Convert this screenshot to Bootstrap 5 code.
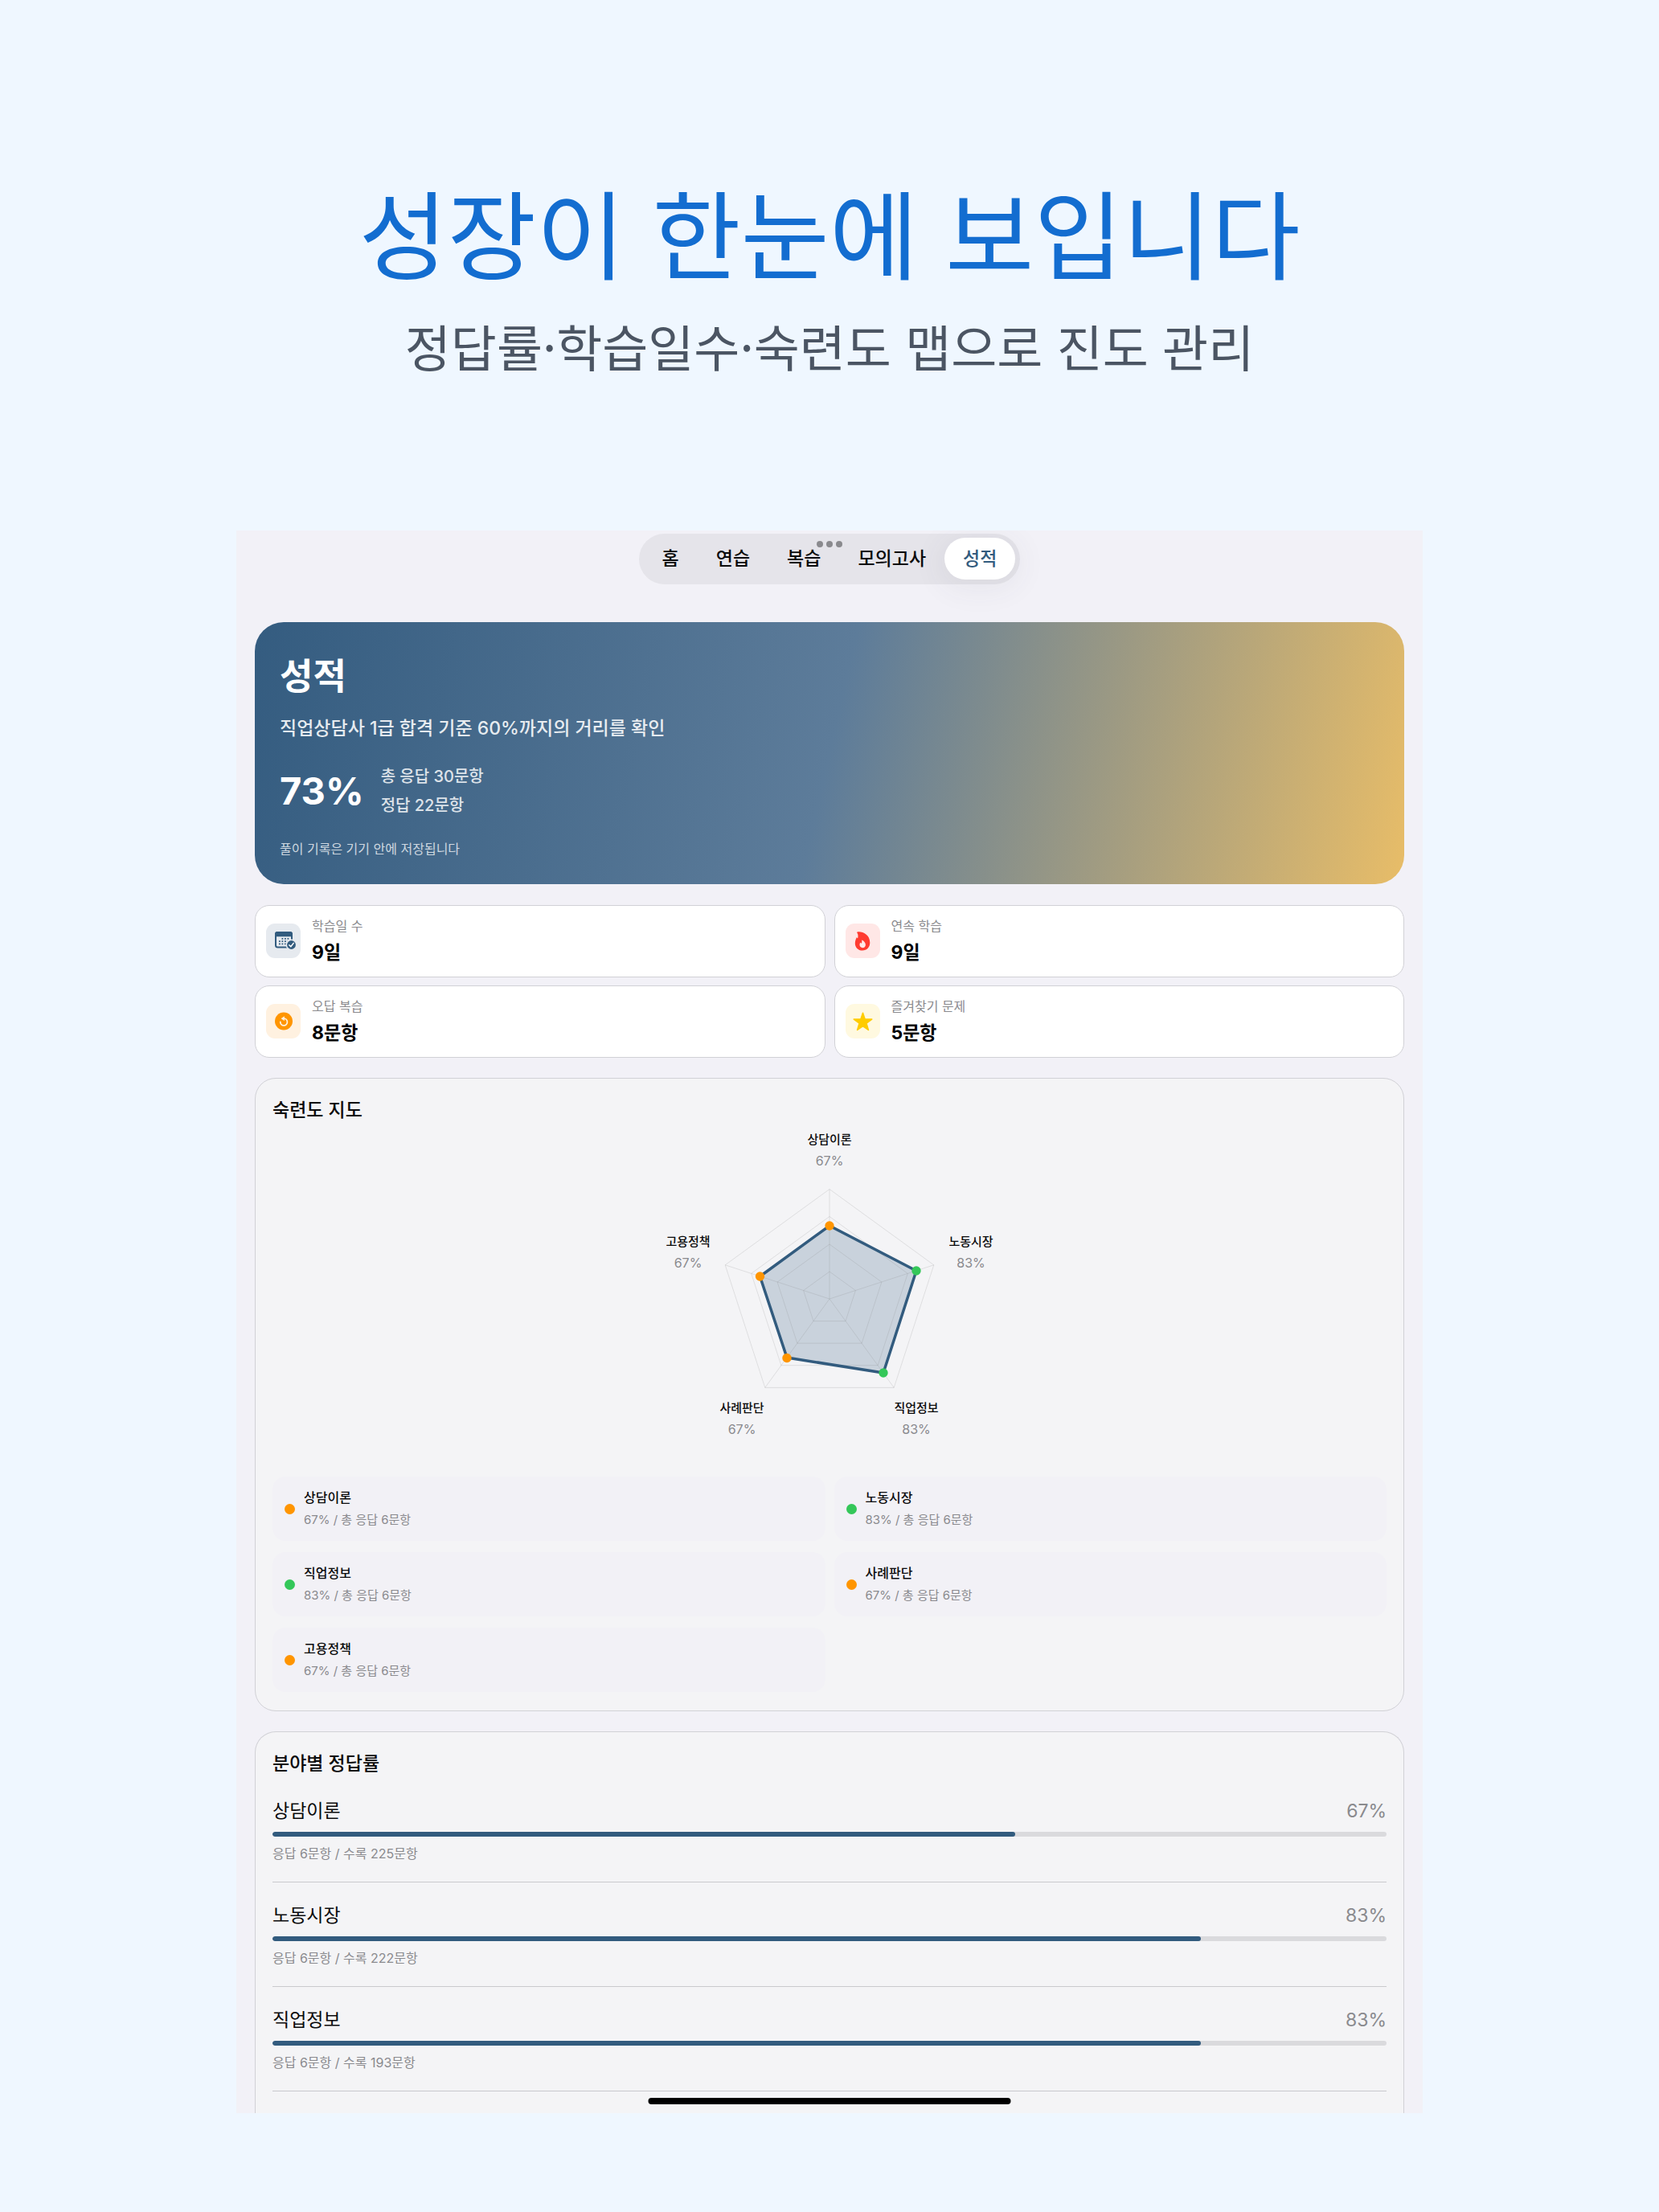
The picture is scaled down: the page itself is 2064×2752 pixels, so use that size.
<!DOCTYPE html>
<html lang="ko">
<head>
<meta charset="utf-8">
<meta name="viewport" content="width=device-width, initial-scale=1">
<title>성적</title>
<link href="https://cdn.jsdelivr.net/npm/bootstrap@5.3.0/dist/css/bootstrap.min.css" rel="stylesheet">
<style>
  :root { --navy: #325b7e; --muted: #8a8a8e; --line: #d1d1d6; --orange: #ff9500; --green: #34c759; }
  body { background: #eff7ff; color: #0b0b0c; font-family: Inter, "Noto Sans CJK KR", sans-serif; font-size: 16px; line-height: 24px; }
  .hero-copy { padding: 207px 24px 180px; font-family: "Noto Sans CJK KR", sans-serif; }
  .hero-copy h1 { font-size: 120px; line-height: 160px; font-weight: 400; color: #136dd0; }
  .hero-copy p { font-size: 62px; line-height: 100px; color: #4b5563; margin-top: 13px; }
  .screen { max-width: 1476px; background: #f2f1f7; padding: 4px 23px 0; overflow: hidden; margin-bottom: 123px; }
  .tabs { background: #e5e4ea; border-radius: 32px; padding: 5px 6px 6px; }
  .tabs .nav-link { font-size: 23px; line-height: 52px; padding: 0 23px; font-weight: 500; color: #0b0b0c; border-radius: 26px; }
  .tabs .nav-link.active { color: var(--navy); background: #fff; box-shadow: 0 6px 36px 8px rgba(60,60,90,.06); }
  .dots { top: 9px; gap: 4px; }
  .dots i { width: 8px; height: 8px; border-radius: 50%; background: #8a8a8e; }
  .summary { margin-top: 47px; border-radius: 36px; padding: 36px 31px 32px; color: #fff; background: linear-gradient(102.8deg, #345c80 0%, #5d7c9a 50%, #e8bd68 100%); }
  .summary h2 { font-size: 45px; line-height: 64px; font-weight: 700; }
  .summary .goal { font-size: 23px; line-height: 32px; font-weight: 500; color: rgba(255,255,255,.88); margin-top: 16px; }
  .summary .figures { gap: 21px; margin-top: 26px; }
  .summary .rate { font-size: 47px; line-height: 56px; font-weight: 700; }
  .summary .counts { font-size: 20px; line-height: 36px; font-weight: 500; color: rgba(255,255,255,.84); }
  .summary .foot { font-size: 16px; line-height: 24px; color: rgba(255,255,255,.75); margin-top: 24px; }
  .stats { --bs-gutter-x: 11px; --bs-gutter-y: 10px; margin-top: 16px; }
  .stat { background: #fff; border: 1px solid var(--line); border-radius: 18px; padding: 9px 13px 11px; gap: 14px; height: 90px; }
  .tile { width: 43px; height: 43px; border-radius: 11px; }
  .stat .name { font-size: 16px; line-height: 30px; color: var(--muted); }
  .stat .amount { font-size: 23px; line-height: 36px; font-weight: 700; color: #000; }
  .panel { background: #f4f4f6; border: 1px solid var(--line); border-radius: 26px; padding: 23px 21px; margin-top: 25px; }
  .panel h3 { font-size: 23px; line-height: 32px; font-weight: 500; margin: 0; }
  .radar { display: block; margin: 0 auto; }
  .radar .axis-name { font-size: 15px; font-weight: 500; fill: #0b0b0c; }
  .radar .axis-rate { font-size: 16px; fill: var(--muted); }
  .legend-grid { --bs-gutter-x: 11px; --bs-gutter-y: 14px; }
  .field { background: #f2f1f6; border-radius: 16px; height: 80px; padding: 0 15px; gap: 11px; }
  .dot { width: 13px; height: 13px; border-radius: 50%; flex: none; }
  .dot.mid { background: var(--orange); } .dot.good { background: var(--green); }
  .field b { font-size: 16px; line-height: 27px; font-weight: 500; }
  .field span { font-size: 15px; line-height: 27px; color: var(--muted); }
  .panel.open { border-bottom: 0; border-radius: 26px 26px 0 0; padding-bottom: 27px; }
  .subject { border-bottom: 1px solid #c9c9cd; padding: 25px 0 21px; }
  .subject.first { padding-top: 27px; }
  .subject .top-line { font-size: 23px; line-height: 32px; }
  .subject .top-line span { color: var(--muted); }
  .subject .progress { height: 6px; margin: 10px 0 7px; background: #dadadd; border-radius: 3px; }
  .subject .progress-bar { background: var(--navy); border-radius: 3px; }
  .subject .info { font-size: 16px; line-height: 28px; color: var(--muted); }
  .home-bar { width: 451px; height: 8px; border-radius: 4px; background: #000; bottom: 11px; }
</style>
</head>
<body>
<header class="hero-copy text-center">
  <h1 class="mb-0">성장이 한눈에 보입니다</h1>
  <p class="mb-0">정답률·학습일수·숙련도 맵으로 진도 관리</p>
</header>

<main class="screen position-relative mx-auto">
  <nav class="d-flex justify-content-center" aria-label="메뉴">
    <div class="tabs nav flex-nowrap">
      <a class="nav-link" href="#home">홈</a>
      <a class="nav-link" href="#practice">연습</a>
      <a class="nav-link" href="#review">복습</a>
      <a class="nav-link" href="#mock">모의고사</a>
      <a class="nav-link active" aria-current="page" href="#score">성적</a>
    </div>
  </nav>
  <div class="dots d-flex position-absolute start-50 translate-middle-x pt-1" aria-hidden="true"><i></i><i></i><i></i></div>

  <section class="summary">
    <h2 class="mb-0">성적</h2>
    <p class="goal mb-0">직업상담사 1급 합격 기준 60%까지의 거리를 확인</p>
    <div class="figures d-flex align-items-center">
      <div class="rate">73%</div>
      <div class="counts"><div>총 응답 30문항</div><div>정답 22문항</div></div>
    </div>
    <p class="foot mb-0">풀이 기록은 기기 안에 저장됩니다</p>
  </section>

  <section class="stats row">
    <div class="col-6"><div class="stat d-flex align-items-center">
      <div class="tile d-flex align-items-center justify-content-center" style="background:#e6eaef">
        <svg width="43" height="43" viewBox="0 0 43 43"><rect x="12" y="11" width="20" height="18.500" rx="2.500" fill="none" stroke="#325b7e" stroke-width="2"/><path fill="#325b7e" d="M11 16.200V13a3 3 0 0 1 3-3h16a3 3 0 0 1 3 3v3.200z"/><path fill="#325b7e" d="M19.500 18h1.800v1.800h-1.800zM23 18h1.800v1.800H23zM26.500 18h1.800v1.800h-1.800zM16 21.200h1.800V23H16zM19.500 21.200h1.800V23h-1.800zM23 21.200h1.800V23H23zM26.500 21.200h1.800V23h-1.800zM16 24.500h1.800v1.800H16zM19.500 24.500h1.800v1.800h-1.800zM23 24.500h1.800v1.800H23z"/><circle cx="31.500" cy="26.500" r="6.200" fill="#325b7e" stroke="#e6eaef" stroke-width="1.600"/><path d="M28.800 26.800l2 2 3.400-4.400" fill="none" stroke="#fff" stroke-width="1.500" stroke-linecap="round" stroke-linejoin="round"/></svg>
      </div>
      <div><div class="name">학습일 수</div><div class="amount">9일</div></div>
    </div></div>
    <div class="col-6"><div class="stat d-flex align-items-center">
      <div class="tile d-flex align-items-center justify-content-center" style="background:#ffe7e6">
        <svg width="43" height="43" viewBox="0 0 43 43"><path fill="#ff3b30" d="M14.600 10.500c4.500-1.400 15.700 2 15.700 13.200 0 5.600-3.800 9.800-9.300 9.800s-9.200-3.900-9.200-9.100c0-3.300 1.300-5.300 2-7.400.2.700.8 1.200 1.400 1.300.5-2.400.6-4.600-.9-6.700-.3-.4-.2-.9.300-1.100z"/><path fill="#ffe7e6" d="M20.900 20.700c2.200 1.100 4 3.500 4 5.800 0 2.300-1.600 3.700-3.700 3.700-2.200 0-3.700-1.500-3.700-3.600 0-1.300.5-2.200 1-3 .3.600.7 1 1.300 1.200.6-1.300.6-2.600.4-3.700 0-.4.300-.6.700-.4z"/></svg>
      </div>
      <div><div class="name">연속 학습</div><div class="amount">9일</div></div>
    </div></div>
    <div class="col-6"><div class="stat d-flex align-items-center">
      <div class="tile d-flex align-items-center justify-content-center" style="background:#fff1e0">
        <svg width="43" height="43" viewBox="0 0 43 43"><circle cx="22" cy="21.500" r="11" fill="#ff9500"/><path d="M17.800 22.500a4.300 4.300 0 1 0 4.300-4.300" fill="none" stroke="#fff1e0" stroke-width="1.800" stroke-linecap="round"/><path fill="#fff1e0" d="M22.600 15.800v4.800l-3.600-2.400z" stroke="#fff1e0" stroke-width=".6" stroke-linejoin="round"/></svg>
      </div>
      <div><div class="name">오답 복습</div><div class="amount">8문항</div></div>
    </div></div>
    <div class="col-6"><div class="stat d-flex align-items-center">
      <div class="tile d-flex align-items-center justify-content-center" style="background:#fff9e0">
        <svg width="43" height="43" viewBox="0 0 43 43"><path fill="#ffcc00" stroke="#ffcc00" stroke-width="1.600" stroke-linejoin="round" d="M21.500 11.300l2.600 7.700h8.600l-6.800 5.100 2.500 8.300-6.900-4.900-6.900 4.900 2.500-8.300-6.800-5.100h8.600z"/></svg>
      </div>
      <div><div class="name">즐겨찾기 문제</div><div class="amount">5문항</div></div>
    </div></div>
  </section>

  <section class="panel">
    <h3>숙련도 지도</h3>
    <svg class="radar" width="500" height="440" viewBox="-250 -219 500 440" role="img" aria-label="숙련도 지도">
      <polygon points="0,-91 108,-35 67,92 -53,73 -86.500,-28" fill="#325b7e" fill-opacity=".22"/>
      <g fill="none" stroke="#78787c" stroke-opacity=".18" stroke-width="1">
        <polygon points="0,-34 32.400,-10.500 20,27.600 -20,27.600 -32.400,-10.500"/>
        <polygon points="0,-68 64.900,-21 40.100,55.200 -40.100,55.200 -64.900,-21"/>
        <polygon points="0,-102.500 97.300,-31.600 60.100,82.700 -60.100,82.700 -97.300,-31.600"/>
        <polygon points="0,-136.500 129.800,-42.200 80.200,110.400 -80.200,110.400 -129.800,-42.200"/>
        <path d="M0 0V-136.500M0 0L129.800-42.200M0 0L80.200 110.400M0 0L-80.200 110.400M0 0L-129.800-42.200"/>
      </g>
      <polygon points="0,-91 108,-35 67,92 -53,73 -86.500,-28" fill="none" stroke="#325b7e" stroke-width="3.500" stroke-linejoin="round"/>
      <g fill="#ff9500"><circle cy="-91" r="5.700"/><circle cx="-53" cy="73.500" r="5.700"/><circle cx="-86.500" cy="-28" r="5.700"/></g>
      <g fill="#34c759"><circle cx="108" cy="-35" r="5.700"/><circle cx="67" cy="92" r="5.700"/></g>
      <g text-anchor="middle">
        <text class="axis-name" x="0" y="-193">상담이론</text><text class="axis-rate" x="0" y="-166">67%</text>
        <text class="axis-name" x="176" y="-66">노동시장</text><text class="axis-rate" x="176" y="-39">83%</text>
        <text class="axis-name" x="108" y="141">직업정보</text><text class="axis-rate" x="108" y="168">83%</text>
        <text class="axis-name" x="-109" y="141">사례판단</text><text class="axis-rate" x="-109" y="168">67%</text>
        <text class="axis-name" x="-176" y="-66">고용정책</text><text class="axis-rate" x="-176" y="-39">67%</text>
      </g>
    </svg>
    <div class="legend-grid row">
      <div class="col-6"><div class="field d-flex align-items-center"><i class="dot mid"></i><div class="d-flex flex-column"><b>상담이론</b><span>67% / 총 응답 6문항</span></div></div></div>
      <div class="col-6"><div class="field d-flex align-items-center"><i class="dot good"></i><div class="d-flex flex-column"><b>노동시장</b><span>83% / 총 응답 6문항</span></div></div></div>
      <div class="col-6"><div class="field d-flex align-items-center"><i class="dot good"></i><div class="d-flex flex-column"><b>직업정보</b><span>83% / 총 응답 6문항</span></div></div></div>
      <div class="col-6"><div class="field d-flex align-items-center"><i class="dot mid"></i><div class="d-flex flex-column"><b>사례판단</b><span>67% / 총 응답 6문항</span></div></div></div>
      <div class="col-6"><div class="field d-flex align-items-center"><i class="dot mid"></i><div class="d-flex flex-column"><b>고용정책</b><span>67% / 총 응답 6문항</span></div></div></div>
    </div>
  </section>

  <section class="panel open">
    <h3>분야별 정답률</h3>
    <div class="subject first">
      <div class="top-line d-flex justify-content-between"><div>상담이론</div><span>67%</span></div>
      <div class="progress" role="progressbar" aria-label="상담이론" aria-valuenow="67" aria-valuemin="0" aria-valuemax="100"><div class="progress-bar" style="width:66.67%"></div></div>
      <div class="info">응답 6문항 / 수록 225문항</div>
    </div>
    <div class="subject">
      <div class="top-line d-flex justify-content-between"><div>노동시장</div><span>83%</span></div>
      <div class="progress" role="progressbar" aria-label="노동시장" aria-valuenow="83" aria-valuemin="0" aria-valuemax="100"><div class="progress-bar" style="width:83.33%"></div></div>
      <div class="info">응답 6문항 / 수록 222문항</div>
    </div>
    <div class="subject">
      <div class="top-line d-flex justify-content-between"><div>직업정보</div><span>83%</span></div>
      <div class="progress" role="progressbar" aria-label="직업정보" aria-valuenow="83" aria-valuemin="0" aria-valuemax="100"><div class="progress-bar" style="width:83.33%"></div></div>
      <div class="info">응답 6문항 / 수록 193문항</div>
    </div>
  </section>
  <div class="home-bar position-absolute start-50 translate-middle-x" aria-hidden="true"></div>
</main>
<script src="https://cdn.jsdelivr.net/npm/bootstrap@5.3.0/dist/js/bootstrap.bundle.min.js"></script>
</body>
</html>
